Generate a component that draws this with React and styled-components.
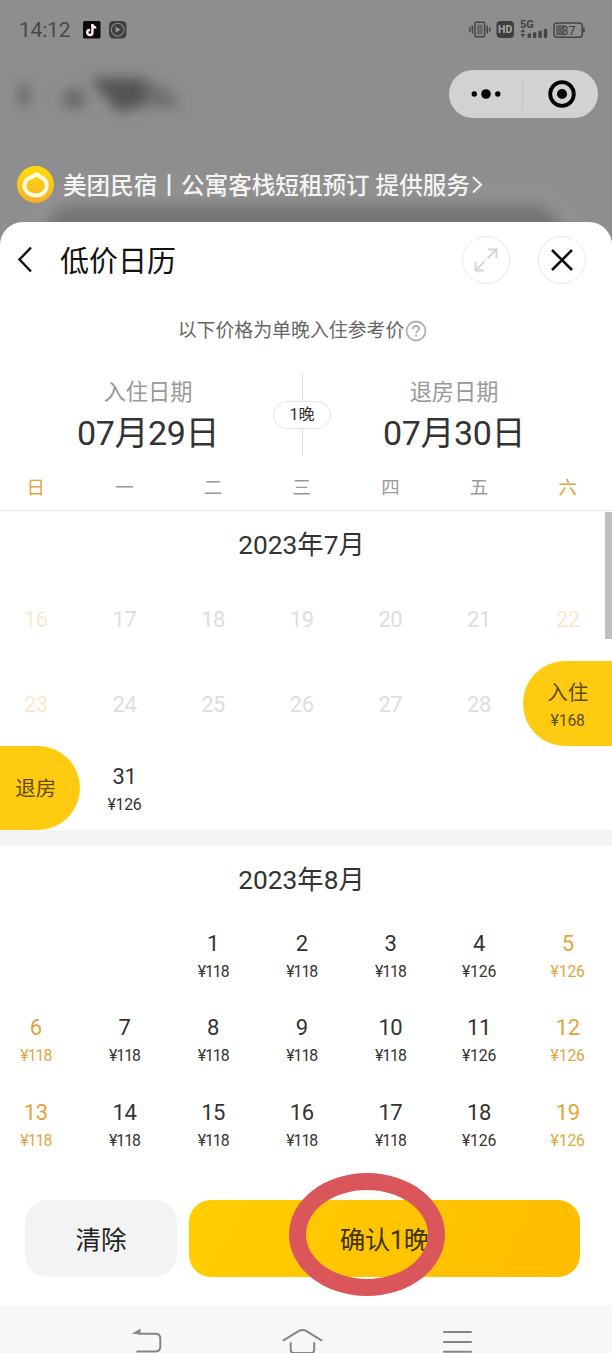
import React from "react";
import styled, { createGlobalStyle, css } from "styled-components";

const GlobalStyle = createGlobalStyle`
  * {
    box-sizing: border-box;
  }
  body {
    margin: 0;
    background: #8e8e8e;
    font-family: Roboto, "Noto Sans CJK SC", sans-serif;
    overflow: hidden;
  }
  button {
    font-family: inherit;
    border: none;
    padding: 0;
    cursor: pointer;
  }
`;

const Screen = styled.div`
  width: 612px;
  height: 1353px;
  display: flex;
  flex-direction: column;
  overflow: hidden;
  background: #8e8e8e;
`;

const StatusBar = styled.div`
  height: 60px;
  padding: 0 27px 0 19px;
  display: flex;
  align-items: center;
  justify-content: space-between;
`;

const StatusGroup = styled.div`
  display: flex;
  align-items: center;
  gap: ${(props) => props.$gap}px;
`;

const Time = styled.div`
  width: 55px;
  font-size: 21px;
  line-height: 24px;
  letter-spacing: -0.2px;
  color: #484848;
`;

const TopBar = styled.div`
  height: 68px;
  padding: 0 14px 0 12px;
  display: flex;
  align-items: center;
  justify-content: space-between;
`;

const Capsule = styled.div`
  width: 149px;
  height: 48px;
  display: flex;
  align-items: center;
  border-radius: 24px;
  background: #d2d2d2;
`;

const CapsuleHalf = styled.div`
  flex: 1;
  height: 29px;
  display: flex;
  align-items: center;
  justify-content: center;
  &:first-child {
    border-right: 1px solid #c2c2c2;
  }
  &:last-child {
    padding-left: 2px;
  }
`;

const Provider = styled.div`
  height: 94px;
  padding: 19px 0 0 17px;
  display: flex;
  align-items: center;
  position: relative;
`;

// out of focus card that shows above the sheet
const CardShadow = styled.div`
  height: 70px;
  position: absolute;
  left: 44px;
  right: 50px;
  top: 76px;
  border-radius: 30px;
  background: #747474;
  box-shadow: 0 0 0 16px #949494;
  filter: blur(8px);
`;

const ProviderText = styled.div`
  margin-left: 9px;
  padding-top: 2px;
  font-size: 23.6px;
  font-weight: 500;
  line-height: 36px;
  white-space: nowrap;
  color: #f4f4f4;
  position: relative;
`;

const ProviderIcon = styled.svg`
  position: relative;
`;

const Sheet = styled.div`
  height: 1083px;
  display: flex;
  flex-direction: column;
  flex-shrink: 0;
  position: relative;
  border-radius: 23px 23px 0 0;
  background: #fff;
  overflow: hidden;
`;

const Header = styled.div`
  height: 76px;
  padding: 0 26px 0 15px;
  display: flex;
  align-items: center;
`;

const Title = styled.div`
  flex: 1;
  margin-left: 26px;
  padding-top: 3px;
  font-size: 29px;
  line-height: 40px;
  color: #111;
`;

const RoundButton = styled.button`
  width: 48px;
  height: 48px;
  margin-left: 28px;
  display: flex;
  align-items: center;
  justify-content: center;
  border: 1.5px solid #e8e8e8;
  border-radius: 50%;
  background: #fff;
`;

const Hint = styled.div`
  height: 64px;
  padding: 1px 7px 0 0;
  display: flex;
  align-items: center;
  justify-content: center;
  gap: 1px;
  font-size: 18.9px;
  line-height: 28px;
  color: #666;
`;

const Stay = styled.div`
  height: 102px;
  display: grid;
  grid-template-columns: 273px 58px 281px;
`;

const StayDate = styled.div`
  padding-top: 14px;
  text-align: center;
  &:first-child {
    padding-left: 23px;
  }
  &:last-child {
    padding-right: 35px;
  }
`;

const StayLabel = styled.div`
  font-size: 22.2px;
  line-height: 32px;
  color: #999;
`;

const StayValue = styled.div`
  font-size: 34px;
  line-height: 50px;
  letter-spacing: -0.4px;
  color: #333;
`;

const Nights = styled.div`
  padding: 12px 0 8px;
  display: flex;
  flex-direction: column;
  align-items: center;
`;

const NightsLine = styled.div`
  width: 1px;
  flex: 1;
  background: #dfe0e8;
`;

const NightsPill = styled.div`
  width: 58px;
  height: 28px;
  border: 1.5px solid #e4e4e8;
  border-radius: 14px;
  font-size: 16px;
  line-height: 26px;
  text-align: center;
  color: #333;
`;

// seven equal columns that start slightly outside the left edge
const Week = styled.div`
  width: 620.5px;
  margin-left: -8.5px;
  display: grid;
  grid-template-columns: repeat(7, 1fr);
`;

const WeekHead = styled(Week)`
  height: 46px;
  flex-shrink: 0;
`;

const WeekDay = styled.div`
  font-size: 18.5px;
  line-height: 48px;
  text-align: center;
  color: ${(props) => (props.$weekend ? "#e2a53c" : "#999")};
`;

const Calendar = styled.div`
  height: 654px;
  flex-shrink: 0;
  position: relative;
  border-top: 1.5px solid #e4e4e4;
`;

const ScrollThumb = styled.div`
  width: 7px;
  height: 127px;
  position: absolute;
  top: 1px;
  right: 0;
  background: #c0c0c0;
`;

const Month = styled.div`
  & + & {
    border-top: 16px solid #f4f4f4;
  }
`;

const MonthTitle = styled.div`
  height: 66px;
  padding-right: 9px;
  font-size: 26.3px;
  line-height: 68px;
  text-align: center;
  color: #333;
`;

const selected = {
  start: css`
    border-radius: 42px 0 0 42px;
    background: #ffcb10;
  `,
  end: css`
    border-radius: 0 42px 42px 0;
    background: #ffcb10;
  `,
};

const Day = styled.div`
  height: 84.4px;
  display: flex;
  flex-direction: column;
  align-items: center;
  justify-content: center;
  color: ${(props) => (props.$weekend ? "#e2a53c" : "#333")};
  opacity: ${(props) => (props.$past && props.$weekend ? 0.25 : 1)};
  ${(props) => props.$past && !props.$weekend && "color: #dedede;"}
  ${(props) => selected[props.$mark]}
  ${(props) => props.$mark && "color: #5c4b0c;"}
`;

const DayNumber = styled.div`
  font-size: ${(props) => (props.$mark ? 20.5 : 22)}px;
  line-height: 28px;
  letter-spacing: ${(props) => (props.$mark ? 0 : -0.4)}px;
  &:only-child {
    padding-top: 2px;
  }
`;

const Price = styled.div`
  font-size: 15.8px;
  line-height: 22px;
  letter-spacing: ${(props) => (props.$tight ? -1 : -0.2)}px;
  margin-top: 3px;
  margin-bottom: -4px;
`;

const Footer = styled.div`
  padding: 36px 32.5px 0 25px;
  display: flex;
  gap: 12px;
  position: relative;
`;

const ClearButton = styled.button`
  width: 152px;
  height: 77px;
  padding-bottom: 2px;
  border-radius: 22px;
  font-size: 25.5px;
  color: #222;
  background: #f3f3f3;
`;

const ConfirmButton = styled(ClearButton)`
  flex: 1;
  letter-spacing: -0.4px;
  color: #40330a;
  background: linear-gradient(120deg, #ffce00, #ffbc00);
`;

const Ring = styled.div`
  width: 156px;
  height: 123px;
  position: absolute;
  left: 289px;
  top: 8.5px;
  border: 17.5px solid #da565a;
  border-radius: 50%;
  pointer-events: none;
`;

const NavBar = styled.div`
  height: 48px;
  flex-shrink: 0;
  background: #f7f7f7;
`;

const weekDays = ["日", "一", "二", "三", "四", "五", "六"];

const july = [
  { n: 16, past: true }, { n: 17, past: true }, { n: 18, past: true },
  { n: 19, past: true }, { n: 20, past: true }, { n: 21, past: true },
  { n: 22, past: true }, { n: 23, past: true }, { n: 24, past: true },
  { n: 25, past: true }, { n: 26, past: true }, { n: 27, past: true },
  { n: 28, past: true },
  { n: "入住", price: 168, mark: "start" },
  { n: "退房", mark: "end" },
  { n: 31, price: 126 },
];

// the first two cells stay empty, 1 August is a Tuesday
const august = [{}, {}].concat(
  Array.from({ length: 19 }, (_, i) => ({
    n: i + 1,
    price: (i + 2) % 7 >= 5 ? 126 : 118,
  }))
);

const MonthBlock = ({ title, days }) => (
  <Month>
    <MonthTitle>{title}</MonthTitle>
    <Week>
      {days.map((day, i) => (
        <Day
          key={i}
          $weekend={i % 7 === 0 || i % 7 === 6}
          $past={day.past}
          $mark={day.mark}
        >
          <DayNumber $mark={day.mark}>{day.n}</DayNumber>
          {day.price && <Price $tight={day.price === 118}>¥{day.price}</Price>}
        </Day>
      ))}
    </Week>
  </Month>
);

const VideoIcons = () => (
  <svg width="44" height="18" viewBox="0 0 44 18">
    <rect width="17.5" height="17.5" rx="1.5" fill="#0b0b14" />
    <g fill="none" strokeWidth="2.1">
      <path d="M9.3 3v8.3a2.6 2.6 0 1 1-2.6-2.6M9.3 3.3c.4 2 1.7 3 3.6 3.2" stroke="#f04a6a" transform="translate(.6 .5)" />
      <path d="M9.3 3v8.3a2.6 2.6 0 1 1-2.6-2.6M9.3 3.3c.4 2 1.7 3 3.6 3.2" stroke="#fff" />
    </g>
    <rect x="26" width="17.5" height="17.5" rx="4.5" fill="#3f3f3f" />
    <circle cx="34.7" cy="8.7" r="6.4" fill="none" stroke="#858585" strokeWidth="1.1" />
    <path d="M32.6 5.8v5.8l5-2.9z" fill="#999" />
  </svg>
);

const PhoneIcons = () => (
  <svg width="116" height="22" viewBox="0 0 116 22">
    <g fill="none" stroke="#444" strokeWidth="1.5">
      <rect x="6" y="3.2" width="9.6" height="14.6" rx="1" />
      <path d="M3.4 6.5v8M.9 8.2v4.6M18.2 6.5v8M20.7 8.2v4.6" />
    </g>
    <rect x="8" y="5.5" width="5.6" height="10" fill="#686868" />
    <rect x="27.5" y="2" width="17.5" height="17" rx="4" fill="#3e3e3e" />
    <text x="36.2" y="14.3" fontSize="10.5" fontWeight="700" textAnchor="middle" fill="#aaa">HD</text>
    <text x="51" y="9" fontSize="11" fontWeight="700" fill="#444">5G</text>
    <g fill="#444">
      <path d="M51.5 13.2l2.4-3 2.4 3zM51.5 15l2.4 3.5 2.4-3.5z" />
      <rect x="58.6" y="14.5" width="3.4" height="4.5" rx=".8" />
      <rect x="64" y="13.2" width="3.4" height="5.8" rx=".8" />
      <rect x="69.4" y="11.7" width="3.4" height="7.3" rx=".8" />
      <rect x="74.8" y="10" width="3.4" height="9" rx=".8" />
    </g>
    <rect x="85" y="4" width="28.3" height="14.3" rx="3" fill="none" stroke="#444" strokeWidth="1.5" />
    <rect x="87" y="6" width="8.6" height="10.3" rx="1" fill="#606060" />
    <path d="M114.9 8.5v5" stroke="#444" strokeWidth="1.6" />
    <text x="99.5" y="15.5" fontSize="12.5" textAnchor="middle" fill="#3d3d3d">37</text>
  </svg>
);

// page title behind the sheet, out of focus
const BlurredTitle = () => (
  <svg width="190" height="68" viewBox="0 0 190 68">
    <defs>
      <filter id="soft" x="-30%" y="-60%" width="160%" height="220%">
        <feGaussianBlur stdDeviation="6.5" />
      </filter>
    </defs>
    <g filter="url(#soft)">
      <ellipse cx="12" cy="35" rx="6" ry="12" fill="#666" />
      <ellipse cx="62" cy="39" rx="12" ry="10" fill="#666" />
      <path d="M78 18h56l12 24-40 10z" fill="#434343" opacity=".8" />
      <path d="M134 22l20 4 16 22h-36z" fill="#707070" />
    </g>
  </svg>
);

const NavIcons = () => (
  <svg width="612" height="48" viewBox="0 0 612 48" fill="none" stroke="#858585" strokeWidth="2">
    <path d="M138 28.7h17.5q4.8 0 4.8 4.8v8.3q0 4.7-4.8 4.7h-19" />
    <path d="M131.5 29l9-5.5v5.5z" fill="#858585" stroke="none" />
    <path d="M283.5 35.3l15-9.2q4-2.3 8 0l15 9.2" strokeLinecap="round" />
    <path d="M290.7 38v7q0 3 3 3h17.5q3 0 3-3v-7" strokeLinecap="round" />
    <path d="M444 27h27M444 36.9h27M444 46.8h27" strokeLinecap="round" />
  </svg>
);

const App = () => {
  return (
    <>
      <GlobalStyle />
      <Screen>
        <StatusBar>
          <StatusGroup $gap={9}>
            <Time>14:12</Time>
            <VideoIcons />
          </StatusGroup>
          <PhoneIcons />
        </StatusBar>
        <TopBar>
          <BlurredTitle />
          <Capsule>
            <CapsuleHalf>
              <svg width="30" height="12" viewBox="0 0 30 12">
                <circle cx="3.3" cy="6" r="2.7" />
                <circle cx="15" cy="6" r="4.8" />
                <circle cx="26.8" cy="6" r="2.7" />
              </svg>
            </CapsuleHalf>
            <CapsuleHalf>
              <svg width="28" height="28" viewBox="0 0 28 28">
                <circle cx="14" cy="14" r="11.8" fill="none" stroke="#000" strokeWidth="3.8" />
                <circle cx="14" cy="14" r="5" />
              </svg>
            </CapsuleHalf>
          </Capsule>
        </TopBar>
        <Provider>
          <CardShadow />
          <ProviderIcon width="37" height="38" viewBox="0 0 37 38">
            <defs>
              <linearGradient id="sun" x1="0" y1="0" x2="0" y2="1">
                <stop offset="0" stopColor="#ffdc08" />
                <stop offset="1" stopColor="#f8b02a" />
              </linearGradient>
            </defs>
            <circle cx="18.5" cy="18.5" r="18.5" fill="url(#sun)" />
            <path
              d="M19.5 8c2.6 2.6 5.6 3.2 8 5.6 2.4 2.4 3 7 1.2 10.2-2 3.8-5.7 5.7-10 5.7s-8.2-1.9-10.2-5.7c-1.8-3.2-1.3-7.7 1.5-10.2 2.4-2.2 6.5-2.6 9.500-5.600z"
              fill="none"
              stroke="#fffde0"
              strokeWidth="4"
              strokeLinejoin="round"
            />
          </ProviderIcon>
          <ProviderText>美团民宿丨公寓客栈短租预订 提供服务</ProviderText>
          <ProviderIcon width="14" height="20" viewBox="0 0 14 20" fill="none" stroke="#f0f0f0" strokeWidth="2">
            <path d="M3 2l8 7.7-8 7.8" />
          </ProviderIcon>
        </Provider>
        <Sheet>
          <Header>
            <svg width="19" height="28" viewBox="0 0 19 28" fill="none" stroke="#111" strokeWidth="2.4">
              <path d="M16 1.500L4.500 13.500l11.500 12" />
            </svg>
            <Title>低价日历</Title>
            <RoundButton>
              <svg width="24" height="24" viewBox="0 0 24 24" fill="none" stroke="#d6d6d6" strokeWidth="2">
                <path d="M13.5 10.5l9-9M14 1.5h8.5v8.5M10.5 13.5l-9 9M1.5 14v8.5h8.5" />
              </svg>
            </RoundButton>
            <RoundButton>
              <svg width="24" height="24" viewBox="0 0 24 24" stroke="#111" strokeWidth="2.6">
                <path d="M2 2l20 20M22 2L2 22" />
              </svg>
            </RoundButton>
          </Header>
          <Hint>
            以下价格为单晚入住参考价
            <svg width="22" height="22" viewBox="0 0 22 22" fill="none" stroke="#b0b0b0" strokeWidth="1.8">
              <circle cx="11" cy="11" r="9.5" />
              <path d="M7.8 9q0-3 3.2-3t3.2 2.7q0 1.5-1.8 2.6-1.3.8-1.3 2M11.1 14.5v2" />
            </svg>
          </Hint>
          <Stay>
            <StayDate>
              <StayLabel>入住日期</StayLabel>
              <StayValue>07月29日</StayValue>
            </StayDate>
            <Nights>
              <NightsLine />
              <NightsPill>1晚</NightsPill>
              <NightsLine />
            </Nights>
            <StayDate>
              <StayLabel>退房日期</StayLabel>
              <StayValue>07月30日</StayValue>
            </StayDate>
          </Stay>
          <WeekHead>
            {weekDays.map((name, i) => (
              <WeekDay key={name} $weekend={i === 0 || i === 6}>
                {name}
              </WeekDay>
            ))}
          </WeekHead>
          <Calendar>
            <MonthBlock title="2023年7月" days={july} />
            <MonthBlock title="2023年8月" days={august} />
            <ScrollThumb />
          </Calendar>
          <Footer>
            <ClearButton>清除</ClearButton>
            <ConfirmButton>确认1晚</ConfirmButton>
            <Ring />
          </Footer>
        </Sheet>
        <NavBar>
          <NavIcons />
        </NavBar>
      </Screen>
    </>
  );
};

export default App;
